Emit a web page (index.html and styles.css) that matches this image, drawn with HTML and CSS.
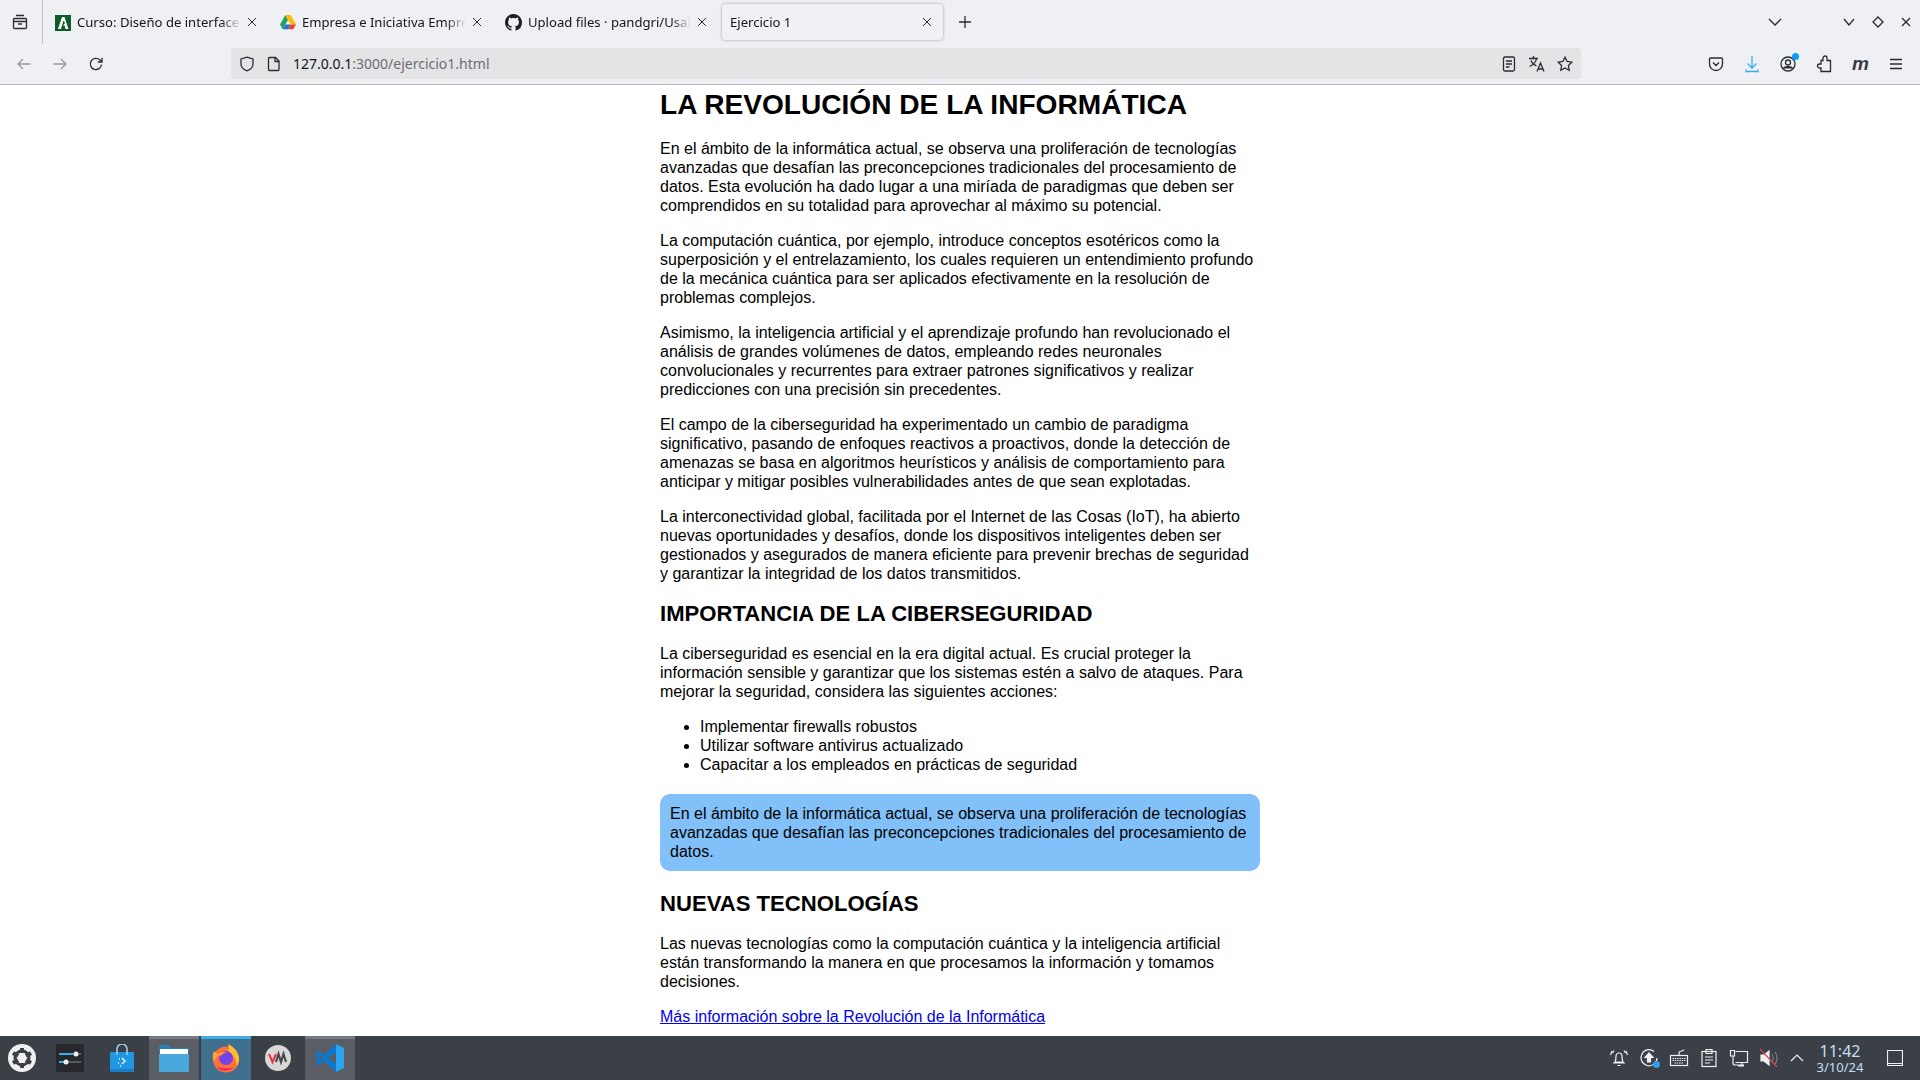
FILE: index.html
```html
<!DOCTYPE html>
<html lang="es">
<head>
	<meta charset="utf-8">
	<title>Ejercicio 1</title>
	<link rel="stylesheet" href="styles.css">
</head>
<body>
	<div class="tabbar">
		<div class="tab-manager">
			<svg width="16" height="16" viewBox="0 0 16 16" class="ico"><path d="M4 1.500h8M2.500 4.500h11a1 1 0 0 1 1 1v8a1 1 0 0 1-1 1h-11a1 1 0 0 1-1-1v-8a1 1 0 0 1 1-1zM1.500 7.500h13M6 10h4"/></svg>
		</div>
		<div class="tab">
			<svg width="16" height="16" viewBox="0 0 16 16"><rect width="16" height="16" fill="#0b5c26"/><path d="M3 14 7 2h2.500l4 12h-3L9.500 10.500H8l2-2.500-1.500-2.500L6 14z" fill="#fff"/></svg>
			<span class="tab-title">Curso: Diseño de interfaces Web</span>
			<svg width="10" height="10" viewBox="0 0 10 10" class="ico close"><path d="M1 1l8 8M9 1l-8 8"/></svg>
		</div>
		<div class="tab">
			<svg width="16" height="15" viewBox="0 0 16 15"><path d="M5.300 0 0 9.500l2.700 4.700L8 5z" fill="#1fa463"/><path d="M5.300 0h5.400L16 9.500h-5.300L8 5z" fill="#fbbc04"/><path d="M2.700 14.200h5.300l2.700-4.700H5.400z" fill="#2a6fdb"/><path d="M8 14.200h5.300L16 9.500h-5.300z" fill="#ea4335"/></svg>
			<span class="tab-title">Empresa e Iniciativa Emprendedora</span>
			<svg width="10" height="10" viewBox="0 0 10 10" class="ico close"><path d="M1 1l8 8M9 1l-8 8"/></svg>
		</div>
		<div class="tab">
			<svg width="17" height="17" viewBox="0 0 16 16"><path fill="#1b1f23" d="M8 0C3.580 0 0 3.580 0 8c0 3.540 2.290 6.530 5.470 7.590.4.070.55-.17.55-.38 0-.19-.01-.82-.01-1.490-2.010.37-2.530-.49-2.690-.94-.09-.23-.48-.94-.82-1.130-.28-.15-.68-.52-.01-.53.630-.01 1.080.58 1.230.82.720 1.210 1.870.87 2.330.66.070-.52.280-.87.510-1.070-1.780-.2-3.640-.89-3.640-3.950 0-.87.310-1.590.820-2.150-.08-.2-.36-1.020.08-2.120 0 0 .67-.21 2.200.82.640-.18 1.320-.27 2-.27s1.360.09 2 .27c1.530-1.040 2.200-.82 2.200-.82.440 1.100.160 1.920.080 2.120.51.560.82 1.270.82 2.150 0 3.070-1.870 3.750-3.650 3.950.29.25.54.73.54 1.480 0 1.070-.01 1.930-.01 2.200 0 .21.150.46.550.38A8.010 8.010 0 0 0 16 8c0-4.420-3.580-8-8-8z"/></svg>
			<span class="tab-title">Upload files · pandgri/Usal-DIW</span>
			<svg width="10" height="10" viewBox="0 0 10 10" class="ico close"><path d="M1 1l8 8M9 1l-8 8"/></svg>
		</div>
		<div class="tab tab-active">
			<span class="tab-title">Ejercicio 1</span>
			<svg width="10" height="10" viewBox="0 0 10 10" class="ico close"><path d="M1 1l8 8M9 1l-8 8"/></svg>
		</div>
		<div class="new-tab">
			<svg width="14" height="14" viewBox="0 0 14 14" class="ico"><path d="M7 1v12M1 7h12"/></svg>
		</div>
		<div class="tabbar-right">
			<svg width="14" height="8" viewBox="0 0 14 8" class="ico list-tabs"><path d="M1 1l6 6 6-6"/></svg>
			<div class="win-btns">
				<svg width="12" height="8" viewBox="0 0 12 8" class="ico"><path d="M1 1l5 6 5-6"/></svg>
				<svg width="12" height="12" viewBox="0 0 12 12" class="ico"><path d="M6 1l5 5-5 5-5-5z"/></svg>
				<svg width="10" height="10" viewBox="0 0 10 10" class="ico"><path d="M1 1l8 8M9 1l-8 8"/></svg>
			</div>
		</div>
	</div>

	<div class="toolbar">
		<div class="nav-btns">
			<svg width="16" height="16" viewBox="0 0 16 16" class="ico dim"><path d="M14.500 8H2M7 3 2 8l5 5"/></svg>
			<svg width="16" height="16" viewBox="0 0 16 16" class="ico dim"><path d="M1.500 8H14M9 3l5 5-5 5"/></svg>
			<svg width="16" height="16" viewBox="0 0 16 16" class="ico"><path d="M13.500 8.500A5.600 5.600 0 1 1 11.700 3.800L14 6M14 1.800V6H9.800"/></svg>
		</div>
		<div class="urlbar">
			<svg width="16" height="16" viewBox="0 0 16 16" class="ico"><path d="M8 1.200 14 3v5c0 3.200-2.500 5.600-6 6.800C4.500 13.600 2 11.200 2 8V3z"/></svg>
			<svg width="14" height="16" viewBox="0 0 14 16" class="ico"><path d="M2.500 1.500h6l3.500 3.500v8.500a1 1 0 0 1-1 1H2.500a1 1 0 0 1-1-1v-11a1 1 0 0 1 1-1zM8 1.500V5.500h4"/></svg>
			<span class="url"><b>127.0.0.1</b>:3000/ejercicio1.html</span>
			<div class="url-icons">
				<svg width="14" height="16" viewBox="0 0 14 16" class="ico"><rect x="1.500" y="1" width="11" height="14" rx="1.500"/><path d="M4 5h6M4 8h6M4 11h3.500"/></svg>
				<svg width="18" height="18" viewBox="0 0 18 18" class="ico"><path d="M1 3.500h9M5.500 1v2.500M8.500 3.500C8 7 5 10 1.500 11.500M3 5.500c1 2.500 3 4.500 5.500 5.500M9 16.500l3.500-8.500 3.500 8.500M10.300 14h4.400"/></svg>
				<svg width="16" height="16" viewBox="0 0 16 16" class="ico"><path d="M8 1.200l2.100 4.300 4.700.7-3.400 3.300.8 4.700L8 11.900l-4.200 2.300.8-4.700L1.200 6.200l4.700-.7z"/></svg>
			</div>
		</div>
		<div class="tool-icons">
			<svg width="16" height="16" viewBox="0 0 16 16" class="ico"><path d="M2.500 2h11a1 1 0 0 1 1 1v5a6.500 6.500 0 0 1-13 0V3a1 1 0 0 1 1-1zM5 6.500 8 9.500l3-3"/></svg>
			<svg width="16" height="18" viewBox="0 0 16 18" class="ico blue"><path d="M8 1v12M3.500 8.500 8 13l4.500-4.500M2 14.500v2h12v-2"/></svg>
			<div class="account">
				<svg width="16" height="16" viewBox="0 0 16 16" class="ico"><circle cx="8" cy="8" r="7"/><circle cx="8" cy="6.500" r="2.500"/><path d="M3.500 12.500c1-2.500 8-2.500 9 0" fill="#2b2a33"/></svg>
				<span class="account-dot"></span>
			</div>
			<svg width="16" height="18" viewBox="0 0 16 18" class="ico"><path d="M7 3.500V3a2 2 0 0 1 4 0v2.500h3.500v11H5v-3.500H3.500a2 2 0 0 1 0-4H5V5.500h2z"/></svg>
			<span class="m-icon">m</span>
			<svg width="14" height="12" viewBox="0 0 14 12" class="ico"><path d="M1 1.500h12M1 6h12M1 10.500h12"/></svg>
		</div>
	</div>

	<div class="page">
		<div class="content">
			<h1>LA REVOLUCIÓN DE LA INFORMÁTICA</h1>
			<p>En el ámbito de la informática actual, se observa una proliferación de tecnologías avanzadas que desafían las preconcepciones tradicionales del procesamiento de datos. Esta evolución ha dado lugar a una miríada de paradigmas que deben ser comprendidos en su totalidad para aprovechar al máximo su potencial.</p>
			<p>La computación cuántica, por ejemplo, introduce conceptos esotéricos como la superposición y el entrelazamiento, los cuales requieren un entendimiento profundo de la mecánica cuántica para ser aplicados efectivamente en la resolución de problemas complejos.</p>
			<p>Asimismo, la inteligencia artificial y el aprendizaje profundo han revolucionado el análisis de grandes volúmenes de datos, empleando redes neuronales convolucionales y recurrentes para extraer patrones significativos y realizar predicciones con una precisión sin precedentes.</p>
			<p>El campo de la ciberseguridad ha experimentado un cambio de paradigma significativo, pasando de enfoques reactivos a proactivos, donde la detección de amenazas se basa en algoritmos heurísticos y análisis de comportamiento para anticipar y mitigar posibles vulnerabilidades antes de que sean explotadas.</p>
			<p>La interconectividad global, facilitada por el Internet de las Cosas (IoT), ha abierto nuevas oportunidades y desafíos, donde los dispositivos inteligentes deben ser gestionados y asegurados de manera eficiente para prevenir brechas de seguridad y garantizar la integridad de los datos transmitidos.</p>
			<h2>IMPORTANCIA DE LA CIBERSEGURIDAD</h2>
			<p>La ciberseguridad es esencial en la era digital actual. Es crucial proteger la información sensible y garantizar que los sistemas estén a salvo de ataques. Para mejorar la seguridad, considera las siguientes acciones:</p>
			<ul>
				<li>Implementar firewalls robustos</li>
				<li>Utilizar software antivirus actualizado</li>
				<li>Capacitar a los empleados en prácticas de seguridad</li>
			</ul>
			<div class="callout">En el ámbito de la informática actual, se observa una proliferación de tecnologías avanzadas que desafían las preconcepciones tradicionales del procesamiento de datos.</div>
			<h2>NUEVAS TECNOLOGÍAS</h2>
			<p>Las nuevas tecnologías como la computación cuántica y la inteligencia artificial están transformando la manera en que procesamos la información y tomamos decisiones.</p>
			<p><a href="#">Más información sobre la Revolución de la Informática</a></p>
		</div>
	</div>

	<div class="taskbar">
		<div class="launcher">
			<svg width="28" height="28" viewBox="0 0 28 28"><circle cx="14" cy="14" r="14" fill="#eff0f1"/><circle cx="14" cy="14" r="7" fill="none" stroke="#3b3f46" stroke-width="3"/><path d="M14 4v5M5 9l5 3M5 19l5-3M14 24v-5M23 9l-5 3M23 19l-5-3" stroke="#3b3f46" stroke-width="4"/></svg>
		</div>
		<div class="task task-settings">
			<svg width="28" height="28" viewBox="0 0 28 28"><rect width="28" height="28" rx="1.500" fill="#26282c"/><path d="M3 10h14" stroke="#3daee9" stroke-width="2"/><path d="M17 10h8M11 18h14" stroke="#55585c" stroke-width="2"/><path d="M3 18h8" stroke="#3daee9" stroke-width="2"/><circle cx="20" cy="10" r="2.500" fill="#eff0f1"/><circle cx="10" cy="18" r="2.500" fill="#eff0f1"/></svg>
		</div>
		<div class="task task-store">
			<svg width="24" height="28" viewBox="0 0 24 28"><path d="M0 8h24v20H0z" fill="#2196e3"/><path d="M0 25h24v3H0z" fill="#1c7fc4"/><path d="M7 11V5a5 5 0 0 1 10 0v6" fill="none" stroke="#9fd6f5" stroke-width="1.500"/><path d="M12 14l3 3-3 3M9 15h1M8 19h1M10 22h1" fill="none" stroke="#fff" stroke-width="1.300"/></svg>
		</div>
		<div class="task task-open">
			<svg width="30" height="28" viewBox="0 0 30 28"><path d="M0 2a1 1 0 0 1 1-1h9l3 3h16a1 1 0 0 1 1 1v4H0z" fill="#2980b9"/><rect x="1" y="5" width="28" height="6" fill="#fff"/><path d="M0 10h30v17a1 1 0 0 1-1 1H1a1 1 0 0 1-1-1z" fill="#4aa8dc"/></svg>
		</div>
		<div class="task task-active">
			<svg width="30" height="30" viewBox="0 0 30 30"><circle cx="15" cy="16.500" r="13" fill="#ff7139"/><path d="M17 1c6 3 11 8 11 15 0 3-1 5-2 7-1-8-5-13-9-14 1-3 1-5 0-8z" fill="#ffbd2e"/><path d="M3 8c-2 4-1.500 8 0 11 1-4 3-6 6-7-2-1-4-2-6-4z" fill="#ffa436"/><circle cx="15" cy="15" r="7" fill="#7542e5"/><path d="M6 11c3-2 7-3 10-1-3 0-5 1-6 3-1-1-3-1-4-2z" fill="#ff9640"/><path d="M6 24c3 4 12 5 17 0-4 2-12 2-17 0z" fill="#f5156c"/></svg>
		</div>
		<div class="task">
			<svg width="26" height="26" viewBox="0 0 26 26"><circle cx="13" cy="13" r="13" fill="#d8d8d8"/><path d="M4 9l3.500 8L11 9" fill="none" stroke="#e8394a" stroke-width="2.200"/><path d="M11 17l2.500-8 2.500 8 2.500-8 2.500 8" fill="none" stroke="#4a4a4a" stroke-width="2.200"/></svg>
		</div>
		<div class="task task-open">
			<svg width="28" height="28" viewBox="0 0 28 28"><path d="M20 0l8 4v20l-8 4L8 17l-5 4-3-2v-10l3-2 5 4z" fill="#0a7ad1"/><path d="M20 0l8 4v20l-8 4z" fill="#2ba3ee"/><path d="M20 8v12l-8-6z" fill="#5a5d63"/><path d="M3 10.500v7l4-3.500z" fill="#5a5d63"/></svg>
		</div>
		<div class="tray">
			<svg width="20" height="20" viewBox="0 0 20 20" class="tray-ico"><path d="M6 14c1-2 1-4 1-6a3 3 0 0 1 6 0c0 2 0 4 1 6zM4 15h12M8.500 17.500h3M3 3 1.500 7M5 2.500 3.500 5M17 3l1.500 4M15 2.500 16.500 5"/></svg>
			<div class="tray-up">
				<svg width="20" height="20" viewBox="0 0 20 20" class="tray-ico"><path d="M15 3.500A8 8 0 1 0 18 10"/><path d="M10 5l4 4.500h-2.500V14h-3V9.500H6z" fill="#eff0f1"/></svg>
				<span class="tray-dot"></span>
			</div>
			<svg width="20" height="20" viewBox="0 0 20 20" class="tray-ico"><rect x="1.500" y="7.500" width="17" height="10"/><path d="M10 7.500V4.500c0-2 5-1 5-3"/><path d="M3.500 10.500h13M3.500 12.500h13M5.500 15h9" stroke-dasharray="1.500 .8"/></svg>
			<svg width="20" height="20" viewBox="0 0 20 20" class="tray-ico"><rect x="3" y="3.500" width="14" height="15"/><path d="M7 1.500h6v4H7zM6 9h8M6 12h8M6 15h5"/></svg>
			<svg width="20" height="20" viewBox="0 0 20 20" class="tray-ico"><path d="M6.500 3.500h12v11h-12M4 8V15a2 2 0 0 0 2 2h9M9 18h6M1.500 2.500h4v5.500h-4zM13 15v3"/></svg>
			<svg width="20" height="20" viewBox="0 0 20 20" class="tray-ico"><path d="M2 7h3l5-4v14l-5-4H2z" fill="#eff0f1"/><path d="M13 6c1.500 2 1.500 6 0 8M16 4c2.500 3 2.500 9 0 12" stroke="#7b7e83"/><path d="M1 1l17 18" stroke="#da4453"/></svg>
			<svg width="14" height="8" viewBox="0 0 14 8" class="tray-ico tray-chevron"><path d="M1 7l6-6 6 6"/></svg>
			<div class="clock">
				<span class="clock-time">11:42</span>
				<span class="clock-date">3/10/24</span>
			</div>
			<svg width="16" height="16" viewBox="0 0 16 16" class="tray-ico tray-desktop"><path d="M.5.500h15v15H.5zM.5 13.500h15"/></svg>
		</div>
	</div>
</body>
</html>
```

FILE: styles.css
```css
* {
	box-sizing: border-box;
}
html, body {
	height: 100%;
}
body {
	margin: 0;
	height: 100vh;
	overflow: hidden;
	display: flex;
	flex-direction: column;
	background: #fff;
	font-family: "Liberation Sans", Arial, sans-serif;
	font-size: 16px;
	line-height: 19px;
	color: #000;
}

/* icons */
svg {
	flex: none;
	display: block;
}
.ico {
	fill: none;
	stroke: #2b2a33;
	stroke-width: 1.300;
}
.ico.dim {
	stroke: #9a9aa0;
}
.ico.blue {
	stroke: #3fa9f0;
}
.ico.close {
	stroke-width: 1;
	margin-bottom: 2px;
}

/* tab strip */
.tabbar {
	height: 44px;
	flex: none;
	display: flex;
	align-items: center;
	background: #eff0f3;
	font-family: "Noto Sans", sans-serif;
	font-size: 13.100px;
	color: #15141a;
}
.tab-manager {
	width: 43px;
	height: 44px;
	flex: none;
	display: flex;
	align-items: center;
	justify-content: center;
	padding-right: 3px;
	border-right: 1px solid #c4c5c8;
}
.tab {
	width: 221px;
	height: 36px;
	flex: none;
	margin-left: 4px;
	padding: 1px 11px 0 8px;
	display: flex;
	align-items: center;
	gap: 6px;
}
.tab-title {
	flex: 1;
	min-width: 0;
	white-space: nowrap;
	overflow: hidden;
	mask-image: linear-gradient(to left, transparent, #000 20px);
}
.tab-active {
	border-radius: 4px;
	background: #f0f1f4;
	box-shadow: 0 0 3px rgba(0, 0, 0, 0.35);
}
.new-tab {
	margin-left: 15px;
}
.tabbar-right {
	margin-left: auto;
	display: flex;
	align-items: center;
}
.list-tabs {
	margin-right: 61px;
}
.win-btns {
	display: flex;
	align-items: center;
	gap: 17px;
	padding-right: 9px;
}

/* nav bar */
.toolbar {
	height: 41px;
	flex: none;
	display: flex;
	align-items: center;
	background: #eff0f3;
	border-bottom: 1px solid #b8b9bb;
	padding-bottom: 1px;
}
.nav-btns {
	width: 231px;
	flex: none;
	display: flex;
	align-items: center;
	gap: 20px;
	padding-left: 16px;
}
.urlbar {
	width: 1350px;
	height: 31px;
	flex: none;
	display: flex;
	align-items: center;
	gap: 12px;
	padding: 0 8px;
	border-radius: 4px;
	background: #e3e4e6;
	font-family: "Noto Sans", sans-serif;
	font-size: 14px;
	color: #6d6d74;
}
.url b {
	font-weight: normal;
	color: #15141a;
}
.url-icons {
	margin-left: auto;
	display: flex;
	align-items: center;
	gap: 11px;
}
.url-icons svg:first-child {
	margin-right: 1px;
}
.tool-icons {
	flex: 1;
	display: flex;
	align-items: center;
	justify-content: space-between;
	padding: 0 17px 0 127px;
}
.account {
	position: relative;
}
.account-dot {
	position: absolute;
	top: -3px;
	right: -3px;
	width: 7px;
	height: 7px;
	border-radius: 50%;
	background: #0a9dff;
}
.m-icon {
	font-family: "Liberation Sans", sans-serif;
	font-size: 19px;
	font-weight: bold;
	font-style: italic;
	color: #3a3941;
}

/* page */
.page {
	flex: 1;
	min-height: 0;
	overflow: hidden;
}
.content {
	width: 600px;
	margin: 0 auto;
}
h1 {
	margin: 0 0 18px;
	padding-top: 4px;
	font-size: 28.100px;
	line-height: 32px;
}
h2 {
	margin: 18px 0 17px;
	font-size: 22.100px;
	line-height: 26px;
}
p {
	margin: 16px 0;
}
ul {
	margin: 16px 0;
	padding-left: 40px;
}
.callout {
	margin: 20px 0;
	padding: 10px;
	border-radius: 10px;
	background: #82c0f9;
}
a {
	color: #0000ee;
}

/* desktop panel */
.taskbar {
	height: 44px;
	flex: none;
	display: flex;
	align-items: stretch;
	background: #3b3f46;
}
.launcher {
	width: 44px;
	display: flex;
	align-items: center;
	justify-content: center;
}
.task {
	width: 50px;
	display: flex;
	align-items: center;
	justify-content: center;
	border-top: 3px solid transparent;
	padding-bottom: 3px;
	margin-right: 2px;
}
.task-settings {
	width: 44px;
	margin-left: 4px;
}
.task-store {
	width: 44px;
	margin-left: 6px;
	margin-right: 5px;
}
.task-open {
	background: #5a5d63;
	border-top-color: #767a80;
}
.task-active {
	background: #41708f;
	border-top-color: #3daee9;
}
.tray {
	margin-left: auto;
	display: flex;
	align-items: center;
	gap: 10px;
}
.tray-ico {
	fill: none;
	stroke: #eff0f1;
	stroke-width: 1.200;
}
.tray-up {
	position: relative;
}
.tray-dot {
	position: absolute;
	right: -1px;
	bottom: 0;
	width: 7px;
	height: 7px;
	border-radius: 50%;
	background: #2e9ff0;
}
.tray-chevron {
	margin: 0 3px 0 1px;
}
.clock {
	width: 46px;
	margin: 0 7px 0 0;
	display: flex;
	flex-direction: column;
	align-items: center;
	font-family: "Noto Sans", sans-serif;
	white-space: nowrap;
	color: #c5dff5;
}
.clock-time {
	font-size: 16px;
	line-height: 17px;
}
.clock-date {
	font-size: 13px;
	line-height: 14px;
}
.tray-desktop {
	margin: 0 17px 0 7px;
}
```
